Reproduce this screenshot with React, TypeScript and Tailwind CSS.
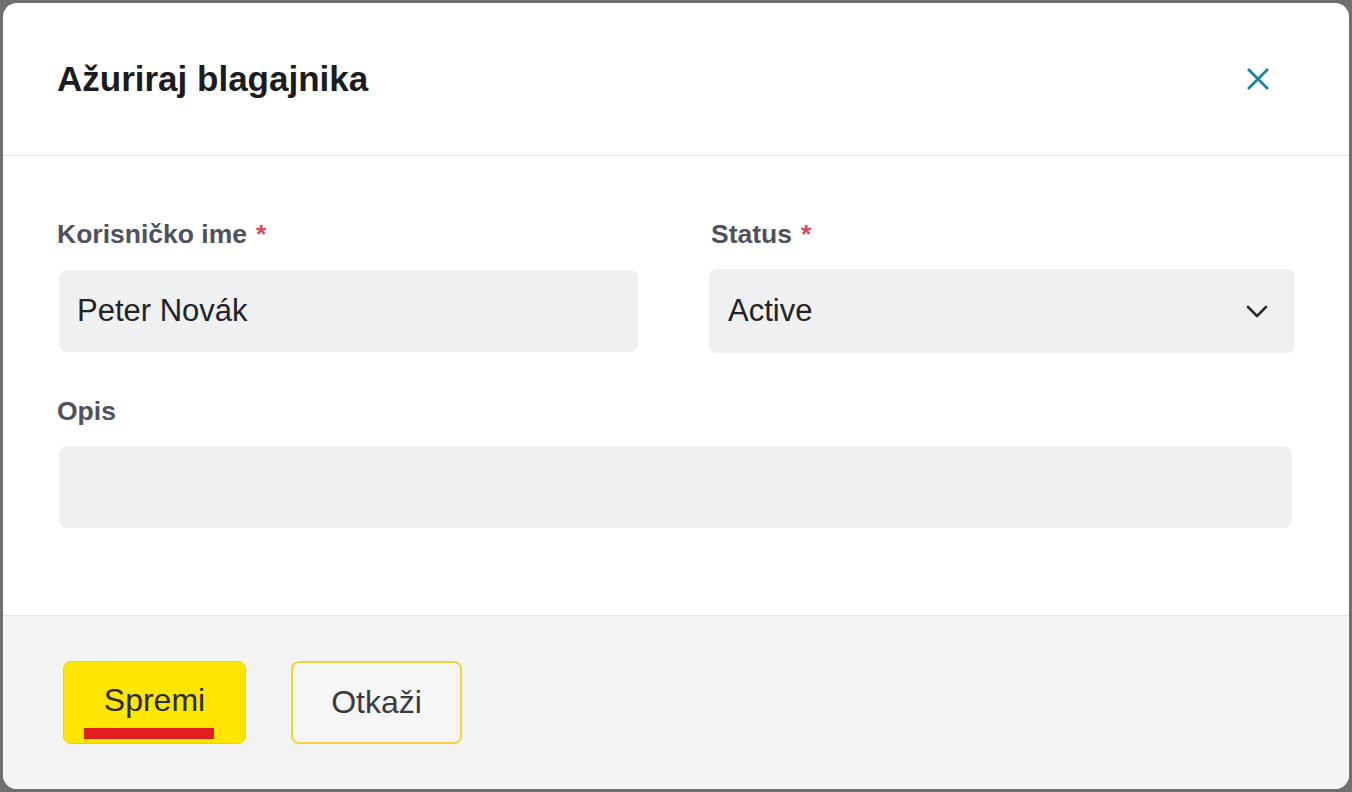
import React from 'react';

// ---------------------------------------------------------------------------
// Small pieces
// ---------------------------------------------------------------------------

function FieldLabel({ children, required }: { children: React.ReactNode; required?: boolean }) {
  return (
    <label className="block h-[32px] text-[26.5px] leading-[32px] font-bold text-[#4f525d]">
      {children}
      {required && <span className="ml-[9px] text-[#e0455a]">*</span>}
    </label>
  );
}

function CloseIcon() {
  return (
    <svg width="26" height="26" viewBox="0 0 26 26" fill="none" stroke="#17869a" strokeWidth={2.8}>
      <path d="M3 3l20 20M23 3L3 23" />
    </svg>
  );
}

function Chevron() {
  return (
    <svg width="24" height="16" viewBox="0 0 24 16" fill="none" stroke="#2b2b2b" strokeWidth={2.6} strokeLinecap="round" strokeLinejoin="round">
      <path d="M3 4l9 9 9-9" />
    </svg>
  );
}

// ---------------------------------------------------------------------------
// Page
// ---------------------------------------------------------------------------

export default function App() {
  return (
    <div
      className="h-[792px] w-full bg-[#6f6f6f] p-[3px]"
      style={{ fontFamily: '"Liberation Sans", Arial, sans-serif' }}
    >
      <div className="flex h-full flex-col overflow-hidden rounded-[14px] bg-white">
        {/* Header */}
        <div className="flex h-[153px] shrink-0 items-center justify-between border-b border-[#e3e6ea] pl-[54px] pr-[78px]">
          <h1 className="text-[35px] font-bold text-[#1c1c1e]">Ažuriraj blagajnika</h1>
          <button type="button" aria-label="Zatvori">
            <CloseIcon />
          </button>
        </div>

        {/* Body */}
        <div className="flex-1 px-[54px] pt-[62px]">
          <div className="grid grid-cols-2 gap-x-[70px]">
            <div>
              <FieldLabel required>Korisničko ime</FieldLabel>
              <div className="mt-[20px] ml-[2px] mr-[3px] flex h-[82px] items-center rounded-[8px] bg-[#eff0f2] px-[18px] text-[31px] text-[#222327]">
                Peter Novák
              </div>
            </div>
            <div>
              <FieldLabel required>Status</FieldLabel>
              <div className="mt-[19px] -ml-[2px] flex h-[84px] items-center justify-between rounded-[8px] bg-[#eff0f2] pl-[19px] pr-[26px] text-[31px] text-[#222327]">
                <span>Active</span>
                <Chevron />
              </div>
            </div>
          </div>

          <div className="mt-[42px]">
            <FieldLabel>Opis</FieldLabel>
            <div className="mt-[19px] ml-[2px] mr-[3px] h-[82px] rounded-[8px] bg-[#eff0f2]" />
          </div>
        </div>

        {/* Footer */}
        <div className="flex h-[174px] shrink-0 items-center gap-[45px] border-t border-[#e3e6ea] bg-[#f3f3f4] pl-[60px]">
          <button
            type="button"
            className="relative h-[83px] w-[183px] rounded-[8px] border border-[#ecd400] bg-[#ffe600] pb-[6px] text-[32px] text-[#2a2a2a]"
          >
            Spremi
            <span className="absolute left-[20px] top-[66px] h-[11px] w-[130px] bg-[#e31e1e]" />
          </button>
          <button
            type="button"
            className="h-[83px] w-[171px] rounded-[8px] border-2 border-[#f2d33b] bg-[#f6f6f6] pb-[2px] text-[32px] text-[#3a3a3d]"
          >
            Otkaži
          </button>
        </div>
      </div>
    </div>
  );
}
